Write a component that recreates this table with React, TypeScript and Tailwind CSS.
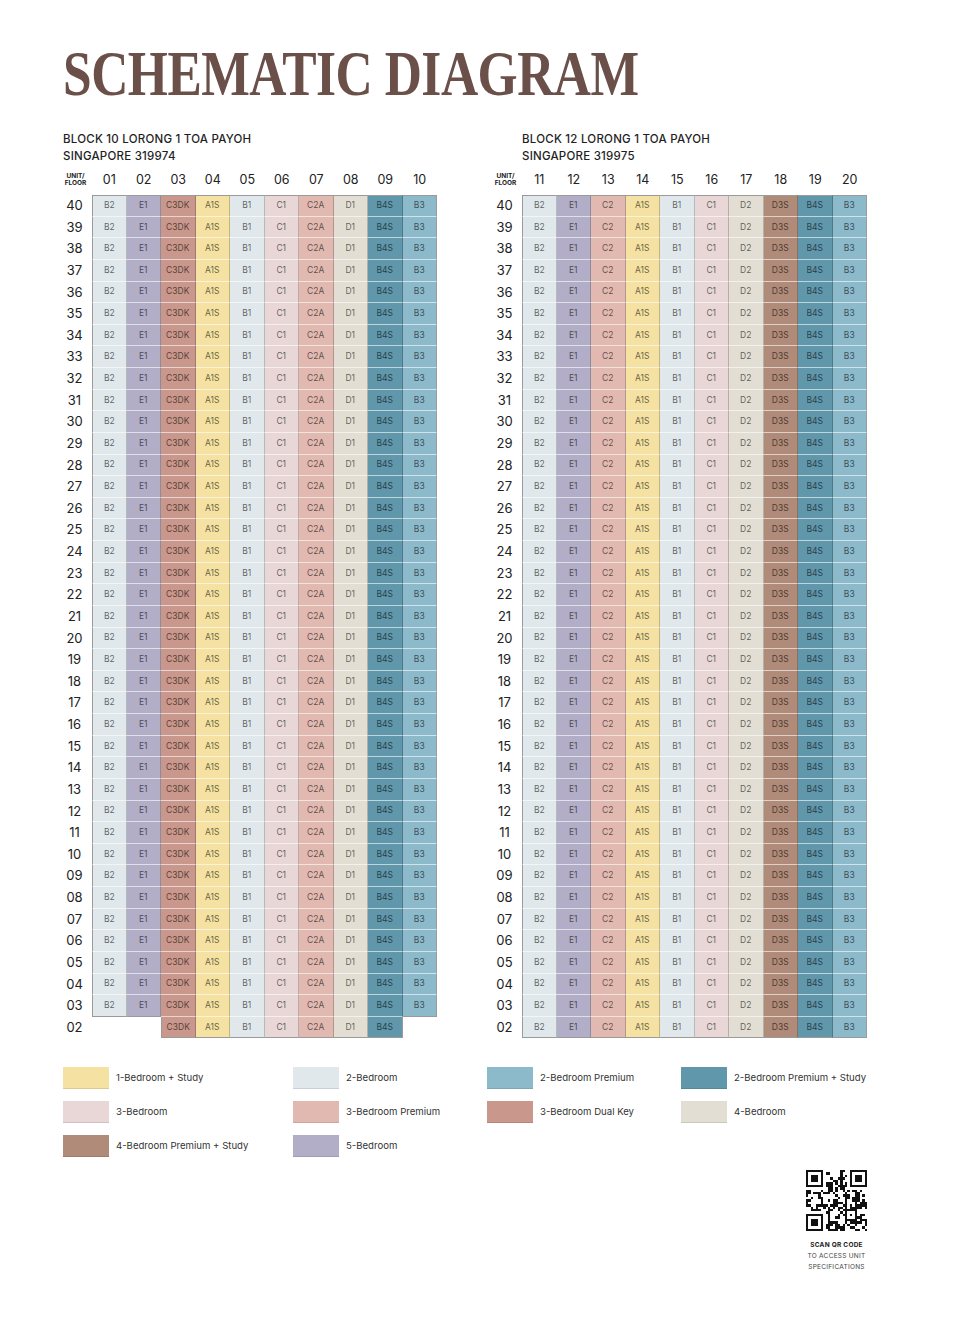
import React from 'react';

const sans = { fontFamily: 'Inter, "Liberation Sans", sans-serif' };

const COLORS: Record<string, string> = {
  B2: 'bg-[#e1e8ec]',
  B1: 'bg-[#e1e8ec]',
  E1: 'bg-[#b2aec7]',
  C3DK: 'bg-[#c9978b]',
  A1S: 'bg-[#f5e2a2]',
  C1: 'bg-[#e8d7d6]',
  C2A: 'bg-[#e2b9b0]',
  C2: 'bg-[#e2b9b0]',
  D1: 'bg-[#e3ded4]',
  D2: 'bg-[#e3ded4]',
  B4S: 'bg-[#6097ab]',
  B3: 'bg-[#8dbacb]',
  D3S: 'bg-[#b08b79]',
};

const floors = Array.from({ length: 39 }, (_, i) => String(40 - i).padStart(2, '0'));

interface BlockProps {
  title: string;
  postal: string;
  units: string[];
  types: string[];
  lowFloorCols: number[];
  indentHeader?: boolean;
}

const Block: React.FC<BlockProps> = ({ title, postal, units, types, lowFloorCols, indentHeader }) => {
  const has = (row: number, col: number) => {
    if (row < 0 || row >= floors.length || col < 0 || col > 9) return false;
    if (row === floors.length - 1) return lowFloorCols.includes(col);
    return true;
  };

  return (
    <div className="w-[374px]">
      <div className={`text-[11.5px] leading-[17px] font-medium tracking-[0.02em] text-[#1f1f1f] ${indentHeader ? 'pl-[29px]' : ''}`} style={sans}>
        <div>{title}</div>
        <div>{postal}</div>
      </div>
      <div className="mt-[5px] flex h-[20px] items-center" style={sans}>
        <div className="w-[29px] pr-[4px] text-center text-[6.5px] font-bold leading-[7px] text-[#222]">
          UNIT/
          <br />
          FLOOR
        </div>
        {units.map((u) => (
          <div key={u} className="w-[34.5px] text-center text-[12.5px] text-[#222]">
            {u}
          </div>
        ))}
      </div>
      <div className="mt-[5px]" style={sans}>
        {floors.map((f, r) => (
          <div key={f} className="flex h-[21.64px]">
            <div className="flex w-[29px] items-center justify-center pr-[6px] text-[13px] text-[#222]">{f}</div>
            {types.map((t, c) => {
              if (!has(r, c)) return <div key={c} className="w-[34.5px]" />;
              const top = !has(r - 1, c);
              const bottom = !has(r + 1, c);
              const left = !has(r, c - 1);
              const right = !has(r, c + 1);
              return (
                <div
                  key={c}
                  className={`flex w-[34.5px] items-center justify-center text-[8.5px] text-black/60 ${COLORS[t]} ${
                    top ? 'border-t border-t-[#9a9a9a]' : ''
                  } ${bottom ? 'border-b border-b-[#9a9a9a]' : 'border-b border-b-white/60'} ${
                    left ? 'border-l border-l-[#9a9a9a]' : ''
                  } ${right ? 'border-r border-r-[#9a9a9a]' : 'border-r border-r-black/20'}`}
                >
                  {t}
                </div>
              );
            })}
          </div>
        ))}
      </div>
    </div>
  );
};

const legend: [string, string][] = [
  ['bg-[#f5e2a2]', '1-Bedroom + Study'],
  ['bg-[#e1e8ec]', '2-Bedroom'],
  ['bg-[#8dbacb]', '2-Bedroom Premium'],
  ['bg-[#6097ab]', '2-Bedroom Premium + Study'],
  ['bg-[#e8d7d6]', '3-Bedroom'],
  ['bg-[#e2b9b0]', '3-Bedroom Premium'],
  ['bg-[#c9978b]', '3-Bedroom Dual Key'],
  ['bg-[#e3ded4]', '4-Bedroom'],
  ['bg-[#b08b79]', '4-Bedroom Premium + Study'],
  ['bg-[#b2aec7]', '5-Bedroom'],
];

const QrCode: React.FC = () => {
  const n = 25;
  const cells: boolean[][] = [];
  let seed = 1337;
  const rnd = () => {
    seed = (seed * 1103515245 + 12345) % 2147483648;
    return seed / 2147483648;
  };
  for (let y = 0; y < n; y++) {
    cells.push([]);
    for (let x = 0; x < n; x++) cells[y].push(rnd() > 0.5);
  }
  const finder = (ox: number, oy: number) => {
    for (let y = -1; y < 8; y++)
      for (let x = -1; x < 8; x++) {
        const yy = oy + y;
        const xx = ox + x;
        if (yy < 0 || xx < 0 || yy >= n || xx >= n) continue;
        const d = Math.max(Math.abs(x - 3), Math.abs(y - 3));
        cells[yy][xx] = d !== 2 && d !== 4;
      }
  };
  finder(0, 0);
  finder(n - 7, 0);
  finder(0, n - 7);
  for (let y = 16; y < 21; y++)
    for (let x = 16; x < 21; x++) {
      const d = Math.max(Math.abs(x - 18), Math.abs(y - 18));
      cells[y][x] = d !== 1;
    }
  let d = '';
  cells.forEach((row, y) => row.forEach((on, x) => { if (on) d += `M${x} ${y}h1v1h-1z`; }));
  return (
    <svg width="61" height="61" viewBox="0 0 25 25" shapeRendering="crispEdges">
      <path d={d} fill="#111" />
    </svg>
  );
};

const App: React.FC = () => {
  return (
    <div className="min-h-[1337px] w-[960px] bg-white pt-[42px]">
      <div className="ml-[63px] w-[804px]">
        <h1
          className="h-[64px] origin-left scale-x-[0.805] whitespace-nowrap text-[64px] font-bold leading-[64px] tracking-[-0.01em] text-[#6b5049]"
          style={{ fontFamily: '"Liberation Serif", "DejaVu Serif", serif' }}
        >
          SCHEMATIC DIAGRAM
        </h1>

        <div className="mt-[25px] flex gap-[56px]">
          <Block
            title="BLOCK 10 LORONG 1 TOA PAYOH"
            postal="SINGAPORE 319974"
            units={['01', '02', '03', '04', '05', '06', '07', '08', '09', '10']}
            types={['B2', 'E1', 'C3DK', 'A1S', 'B1', 'C1', 'C2A', 'D1', 'B4S', 'B3']}
            lowFloorCols={[2, 3, 4, 5, 6, 7, 8]}
          />
          <Block
            title="BLOCK 12 LORONG 1 TOA PAYOH"
            postal="SINGAPORE 319975"
            units={['11', '12', '13', '14', '15', '16', '17', '18', '19', '20']}
            types={['B2', 'E1', 'C2', 'A1S', 'B1', 'C1', 'D2', 'D3S', 'B4S', 'B3']}
            lowFloorCols={[0, 1, 2, 3, 4, 5, 6, 7, 8, 9]}
            indentHeader
          />
        </div>

        <div className="mt-[29px] grid grid-cols-[230px_194px_194px_186px] gap-y-[12px]" style={sans}>
          {legend.map(([bg, label]) => (
            <div key={label} className="flex h-[22px] items-center">
              <div className={`h-[22px] w-[46px] shrink-0 border-b border-b-black/10 ${bg}`} />
              <span className="ml-[7px] whitespace-nowrap text-[9.6px] text-[#333]">{label}</span>
            </div>
          ))}
        </div>

        <div className="mt-[13px] flex justify-end">
          <div className="flex w-[61px] flex-col items-center" style={sans}>
            <QrCode />
            <div className="mt-[9px] whitespace-nowrap text-[6.5px] font-bold leading-[11px] tracking-[0.04em] text-[#222]">SCAN QR CODE</div>
            <div className="whitespace-nowrap text-[6.5px] leading-[11px] tracking-[0.04em] text-[#444]">TO ACCESS UNIT</div>
            <div className="whitespace-nowrap text-[6.5px] leading-[11px] tracking-[0.04em] text-[#444]">SPECIFICATIONS</div>
          </div>
        </div>
      </div>
    </div>
  );
};

export default App;
